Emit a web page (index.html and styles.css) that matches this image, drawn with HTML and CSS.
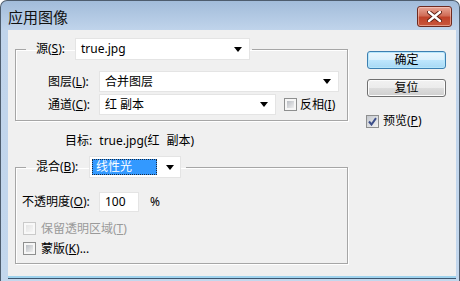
FILE: index.html
```html
<!DOCTYPE html>
<html>
<head>
  <meta charset="UTF-8">
  <title>应用图像</title>
  <link rel="stylesheet" href="styles.css">
</head>
<body>
  <div class="window">
    <div class="titlebar">
      <span class="caption">应用图像</span>
      <span class="close">
        <svg width="15" height="11" viewBox="0 0 15 11"><path d="M2 1 L13 10 M13 1 L2 10" stroke="#5a1c10" stroke-width="4.2" stroke-linecap="round"/><path d="M2 1 L13 10 M13 1 L2 10" stroke="#fff" stroke-width="2.4" stroke-linecap="round"/></svg>
      </span>
    </div>
    <div class="client">
      <div class="main">
        <fieldset class="group">
          <legend class="legend legend-source">
            <span class="lbl">源(<u>S</u>):</span>
            <span class="select w-source">true.jpg<i class="arrow"></i></span>
          </legend>
          <div class="rows">
            <div class="row">
              <span class="lbl lbl-row">图层(<u>L</u>):</span>
              <span class="select w-layer">合并图层<i class="arrow"></i></span>
            </div>
            <div class="row">
              <span class="lbl lbl-row">通道(<u>C</u>):</span>
              <span class="select w-channel">红 副本<i class="arrow"></i></span>
              <span class="check check-invert"><span class="box"></span>反相(<u>I</u>)</span>
            </div>
          </div>
        </fieldset>

        <div class="target">目标: true.jpg(红 副本)</div>

        <fieldset class="group group-blend">
          <legend class="legend legend-blend">
            <span class="lbl">混合(<u>B</u>):</span>
            <span class="select w-blend"><span class="picked">线性光</span><i class="arrow"></i></span>
          </legend>
          <div class="row opacity">
            <span class="lbl lbl-opacity">不透明度(<u>O</u>):</span>
            <span class="field">100</span>
            <span class="unit">%</span>
          </div>
          <div class="check check-row disabled"><span class="box"></span>保留透明区域(<u>T</u>)</div>
          <div class="check check-row mask"><span class="box"></span>蒙版(<u>K</u>)...</div>
        </fieldset>
      </div>

      <div class="side">
        <button class="btn btn-default">确定</button>
        <button class="btn">复位</button>
        <div class="check check-preview">
          <span class="box checked">
            <svg width="9" height="9" viewBox="0 0 9 9"><path d="M1 4.5 L3.5 7.5 L8 1.2" fill="none" stroke="#3d4f8a" stroke-width="2"/></svg>
          </span>预览(<u>P</u>)
        </div>
      </div>
    </div>
  </div>
</body>
</html>
```

FILE: styles.css
```css
body { margin: 0; font-family: "Noto Sans", "Noto Sans CJK SC", sans-serif; font-size: 12px; line-height: 16px; color: #000; }
u { text-decoration: underline; text-underline-offset: 1px; }

.window { width: 460px; height: 281px; box-sizing: border-box; border: 1px solid #4e5d6e; border-bottom: none; border-radius: 7px 7px 0 0; background: linear-gradient(#a2bcda, #c0d4eb 29px, #c3d7ed); display: flex; flex-direction: column; overflow: hidden; }

.titlebar { height: 29px; flex: none; display: flex; align-items: center; justify-content: space-between; padding: 0 7px 0 7px; }
.caption { font-size: 15px; line-height: 18px; font-family: "Noto Sans CJK SC", sans-serif; color: #111; margin-top: 3px; }
.close { width: 35px; height: 21px; box-sizing: border-box; margin-top: 2px; border: 1px solid #6e2a1f; border-radius: 3px; background: linear-gradient(#e8a696, #d16e58 45%, #c0432a 55%, #c9573c); box-shadow: inset 0 0 0 1px rgba(255,220,210,0.5); display: flex; align-items: center; justify-content: center; }

.client { flex: none; height: 246px; margin: 0 3px 0 7px; background: #f0f0f0; display: flex; padding-left: 7px; box-shadow: 0 2px 0 #9fd3ee, 0 3px 0 #3d5670; }

.main { width: 333px; }

.group { margin: 8px 0 0; padding: 0 0 5px; border: 1px solid #a6a6a6; box-shadow: inset 1px 1px 0 #fff, 1px 1px 0 #fff; min-width: 0; }
.legend { display: flex; align-items: center; margin-left: 10px; padding: 0 2px 0 10px; }
.legend-blend { padding-right: 5px; }

.lbl { white-space: nowrap; }
.legend .lbl { margin-right: 5px; }
.legend-source .lbl { width: 34px; }
.legend-blend .lbl { width: 48px; }

.select { position: relative; display: flex; align-items: center; justify-content: space-between; box-sizing: border-box; height: 21px; padding-left: 5px; background: #fff; border: 1px solid #e4e4e4; }
.legend .select { height: 22px; }
.arrow { width: 0; height: 0; border-style: solid; border-width: 5px 4px 0; border-color: #000 transparent transparent; margin-right: 7px; }
.w-source { width: 175px; }
.w-layer { width: 240px; }
.w-channel { width: 177px; }
.w-blend { width: 92px; padding-left: 2px; }
.w-blend .arrow { margin-right: 6px; }
.picked { width: 65px; height: 16px; box-sizing: border-box; background: #3399ff; color: #fff; padding-left: 3px; line-height: 14px; border: 1px dotted #1a2a40; }

.rows { display: flex; flex-direction: column; gap: 2px; margin-top: 11px; padding-left: 32px; }
.row { display: flex; align-items: center; }
.lbl-row { width: 51px; }

.check { display: flex; align-items: center; white-space: nowrap; }
.box { width: 13px; height: 13px; flex: none; box-sizing: border-box; border: 1px solid #8e8f8f; padding: 2px; background: linear-gradient(135deg, #babec4, #efefef) content-box, #f6f6f6; display: flex; align-items: center; justify-content: center; }
.check-invert { margin-left: 8px; }
.check-invert .box { margin-right: 3px; }

.target { margin-top: 12px; padding-left: 50px; word-spacing: 4px; }

.group-blend { margin-top: 7px; padding-bottom: 8px; }
.opacity { margin-top: 14px; padding-left: 6px; }
.lbl-opacity { width: 77px; }
.field { box-sizing: border-box; width: 40px; height: 20px; padding-left: 5px; background: #fff; border: 1px solid #e4e4e4; display: flex; align-items: center; }
.unit { margin-left: 11px; }

.check-row { height: 13px; padding-left: 7px; }
.check-row .box { margin-right: 5px; }
.disabled { margin-top: 10px; color: #9a9a9a; }
.disabled .box { border-color: #cacaca; background: linear-gradient(135deg, #e4e4e4, #f6f6f6) content-box, #f8f8f8; }
.mask { margin-top: 7px; }

.side { width: 79px; margin-left: 19px; padding-top: 21px; display: flex; flex-direction: column; }
.btn { height: 18px; padding: 0; font: inherit; line-height: 14px; color: #000; border: 1px solid #707070; border-radius: 3px; background: linear-gradient(#f2f2f2, #ebebeb 50%, #dddddd 50%, #cfcfcf); box-shadow: inset 0 0 0 1px #fcfcfc; }
.btn + .btn { margin-top: 10px; }
.btn-default { border-color: #3c7fb1; background: linear-gradient(#eaf6fd, #d9f0fc 50%, #bee6fd 50%, #a7d9f5); box-shadow: inset 0 0 0 1px #b6e6fb; }
.check-preview { margin-top: 16px; margin-left: -1px; }
.check-preview .box { margin-right: 4px; padding: 0; }
.box.checked { background: linear-gradient(135deg, #c4c8ce, #f2f2f2); }
```
